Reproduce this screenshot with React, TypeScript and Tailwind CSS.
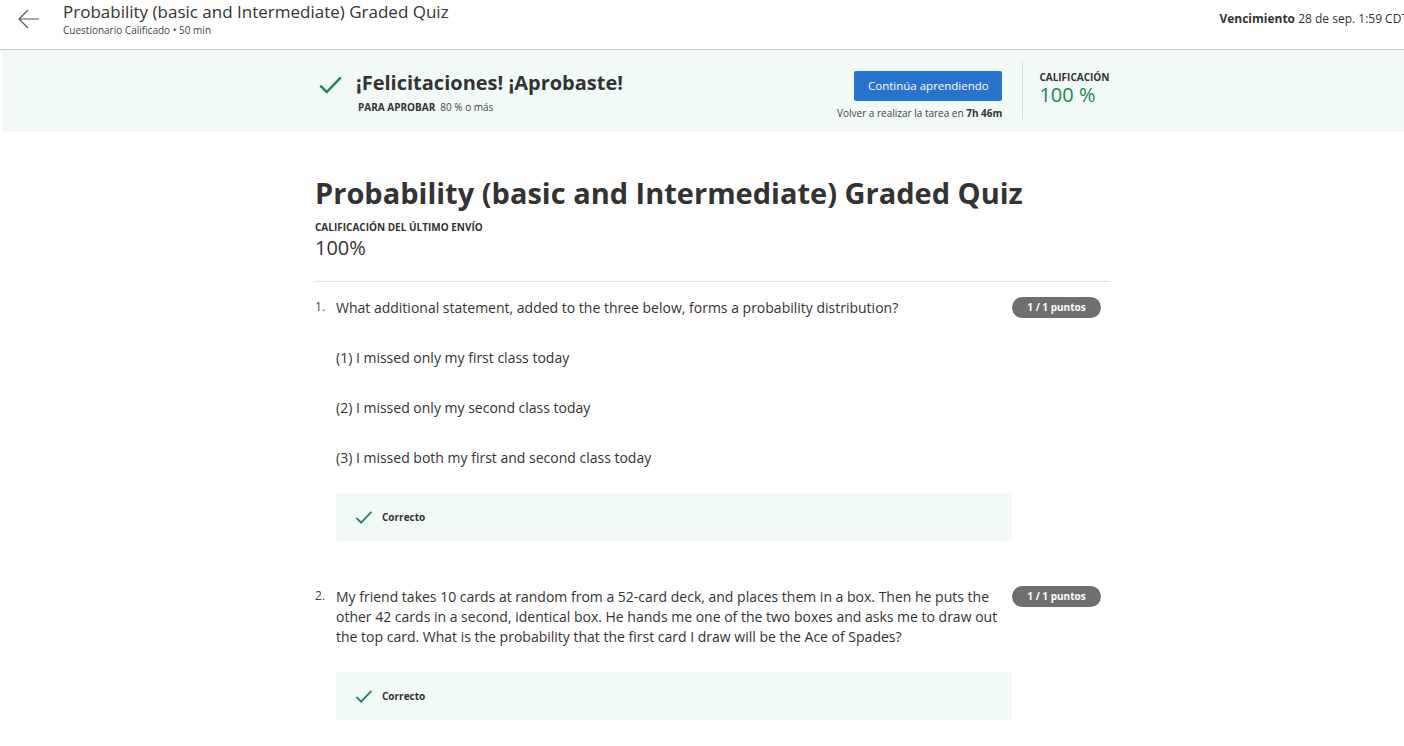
import { Fragment } from "react";

const Check = ({ className }: { className?: string }) => (
    <svg viewBox="0 0 24 24" className={className} fill="none" stroke="currentColor" strokeWidth={2.2}>
        <path d="M3 12.5l6 6L22 5" />
    </svg>
);

const questions = [
    {
        n: 1,
        text: "What additional statement, added to the three below, forms a probability distribution?",
        options: [
            "(1) I missed only my first class today",
            "(2) I missed only my second class today",
            "(3) I missed both my first and second class today",
        ],
    },
    {
        n: 2,
        text: "My friend takes 10 cards at random from a 52-card deck, and places them in a box. Then he puts the other 42 cards in a second, identical box. He hands me one of the two boxes and asks me to draw out the top card. What is the probability that the first card I draw will be the Ace of Spades?",
        options: [],
    },
];

export default function App() {
    return (
        <div className="w-[1404px] h-[746px] overflow-hidden bg-white text-[#333] font-['Open_Sans',sans-serif]">
            {/* top header */}
            <header className="h-[50px] flex items-start border-b border-[#c4c4c4]">
                <button className="w-[56px] h-[38px] flex items-center justify-center text-[#555] pl-[1px]">
                    <svg viewBox="0 0 24 24" className="w-[24px] h-[24px]" fill="none" stroke="currentColor" strokeWidth={1.2}>
                        <path d="M22 12H2M11 3l-9 9 9 9" />
                    </svg>
                </button>
                <div className="ml-[7px] flex flex-col">
                    <h2 className="text-[17px] leading-[24px] text-[#333]">Probability (basic and Intermediate) Graded Quiz</h2>
                    <span className="text-[10px] leading-[12px] text-[#444]">Cuestionario Calificado • 50 min</span>
                </div>
                <div className="ml-auto mt-[10px] whitespace-nowrap text-[12px] text-[#333] mr-[-4px]">
                    <span className="font-bold">Vencimiento</span> 28 de sep. 1:59 CDT
                </div>
            </header>

            {/* result banner */}
            <section className="mt-[2px] ml-[2px] h-[80px] bg-[#f1faf7] flex">
                <div className="ml-[315px] flex items-start pt-[20px]">
                    <Check className="w-[26px] h-[26px] text-[#1f8354]" />
                    <div className="ml-[13px]">
                        <h3 className="text-[20px] leading-[22px] font-bold text-[#333]">¡Felicitaciones! ¡Aprobaste!</h3>
                        <p className="mt-[7px] ml-[2px] text-[10px] leading-[12px] text-[#444]">
                            <span className="font-bold text-[#333] mr-[5px]">PARA APROBAR</span>80 % o más
                        </p>
                    </div>
                </div>
                <div className="ml-[214px] pt-[19px] flex flex-col items-end">
                    <button className="w-[148px] h-[30px] rounded-[2px] bg-[#2a73cc] text-white text-[11.5px]">Continúa aprendiendo</button>
                    <span className="mt-[6px] text-[10px] leading-[12px] text-[#444]">
                        Volver a realizar la tarea en <span className="font-bold text-[#333]">7h 46m</span>
                    </span>
                </div>
                <div className="ml-[20px] mt-[9px] h-[58px] border-l border-[#d6dcda]" />
                <div className="ml-[16px] pt-[18px] flex flex-col">
                    <span className="text-[10px] leading-[14px] font-bold text-[#333]">CALIFICACIÓN</span>
                    <span className="text-[20px] leading-[22px] text-[#1f8354]">100 %</span>
                </div>
            </section>

            {/* main column */}
            <main className="ml-[315px] w-[795px] pt-[42px]">
                <h1 className="text-[29px] leading-[38px] font-bold text-[#333]">Probability (basic and Intermediate) Graded Quiz</h1>
                <div className="mt-[9px] text-[10px] leading-[12px] font-bold text-[#333]">CALIFICACIÓN DEL ÚLTIMO ENVÍO</div>
                <div className="mt-[1px] text-[20px] leading-[28px] text-[#333]">100%</div>
                <hr className="mt-[19px] border-[#e1e1e1]" />

                <div className="pt-[15px]">
                    {questions.map((q) => (
                        <Fragment key={q.n}>
                            <div className="flex items-start mb-[45px]">
                                <span className="w-[21px] shrink-0 text-[12px] leading-[20px] text-[#444]">{q.n}.</span>
                                <div className="flex-1">
                                    <div className="flex items-start">
                                        <p className="w-[668px] text-[14px] leading-[20px] text-[#333] pt-[1px]">{q.text}</p>
                                        <span className="ml-auto mr-[9px] mt-[0px] h-[21px] w-[89px] shrink-0 flex items-center justify-center rounded-full bg-[#6f6f6f] text-white text-[10px] font-bold">
                                            1 / 1 puntos
                                        </span>
                                    </div>
                                    {q.options.length > 0 && (
                                        <div className="mt-[30px] flex flex-col gap-[30px]">
                                            {q.options.map((o) => (
                                                <p key={o} className="text-[14px] leading-[20px] text-[#333]">{o}</p>
                                            ))}
                                        </div>
                                    )}
                                    <div className="mt-[25px] w-[676px] h-[48px] bg-[#f1faf7] flex items-center pl-[18px]">
                                        <Check className="w-[19px] h-[19px] text-[#1f8354]" />
                                        <span className="ml-[9px] text-[10px] font-bold text-[#333]">Correcto</span>
                                    </div>
                                </div>
                            </div>
                        </Fragment>
                    ))}
                </div>
            </main>
        </div>
    );
}
